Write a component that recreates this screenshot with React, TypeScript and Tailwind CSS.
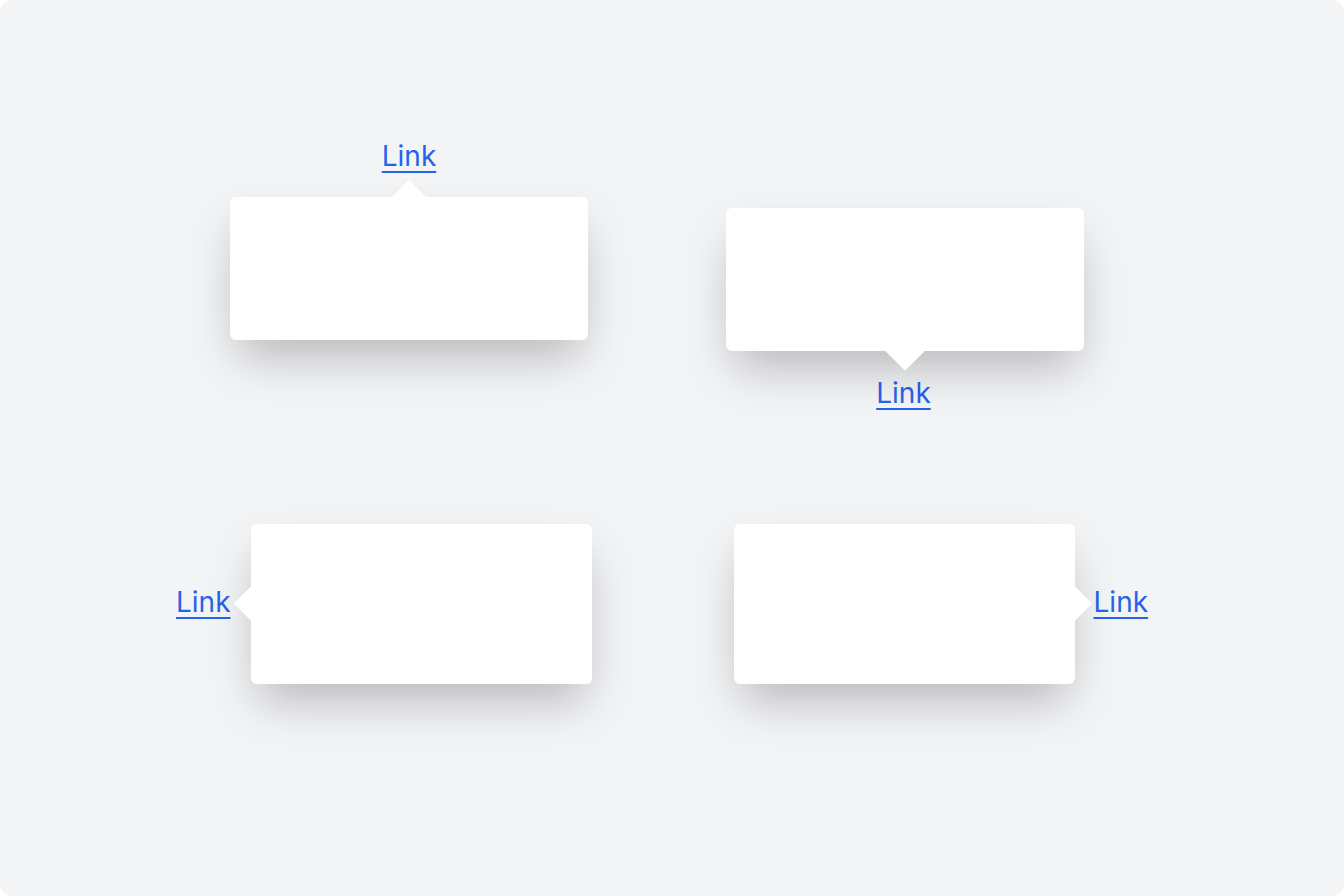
import React from 'react';

const linkClass =
  "text-[28px] leading-[34px] text-[#2563eb] underline decoration-2 underline-offset-[5px] font-['Inter',sans-serif]";

const cardClass =
  'relative rounded-md bg-white shadow-[0_24px_48px_-8px_rgba(0,0,0,0.25)]';

// little rotated square used as the popover pointer
function Arrow({ className }: { className: string }) {
  return <span className={`absolute rotate-45 bg-white ${className}`} />;
}

export default function App() {
  return (
    <div className="h-[896px] w-full bg-white">
      <div className="h-full rounded-xl bg-[#f3f4f6] pt-[139px]">
        {/* top row */}
        <div className="flex items-start">
          <div className="ml-[230px] flex w-[358px] flex-col items-center">
            <a className={linkClass}>Link</a>
            <div className={`${cardClass} mt-[24px] h-[143px] w-full`}>
              <Arrow className="left-1/2 top-[-12px] h-[25px] w-[25px] -translate-x-1/2" />
            </div>
          </div>

          <div className="ml-[138px] mt-[69px] flex w-[358px] flex-col items-center">
            <div className={`${cardClass} h-[143px] w-full`}>
              <Arrow className="left-1/2 bottom-[-14px] h-[28px] w-[28px] -translate-x-1/2" />
            </div>
            <a className={`${linkClass} mt-[25px] -ml-[3px]`}>Link</a>
          </div>
        </div>

        {/* bottom row */}
        <div className="mt-[114px] flex items-start">
          <div className="ml-[176px] flex items-center">
            <a className={`${linkClass} -mt-[4px]`}>Link</a>
            <div className={`${cardClass} ml-[20px] h-[160px] w-[341px]`}>
              <Arrow className="left-[-12px] top-[67px] h-[25px] w-[25px]" />
            </div>
          </div>

          <div className="ml-[142px] flex items-center">
            <div className={`${cardClass} h-[160px] w-[341px]`}>
              <Arrow className="right-[-12px] top-[67px] h-[25px] w-[25px]" />
            </div>
            <a className={`${linkClass} ml-[19px] -mt-[4px]`}>Link</a>
          </div>
        </div>
      </div>
    </div>
  );
}
